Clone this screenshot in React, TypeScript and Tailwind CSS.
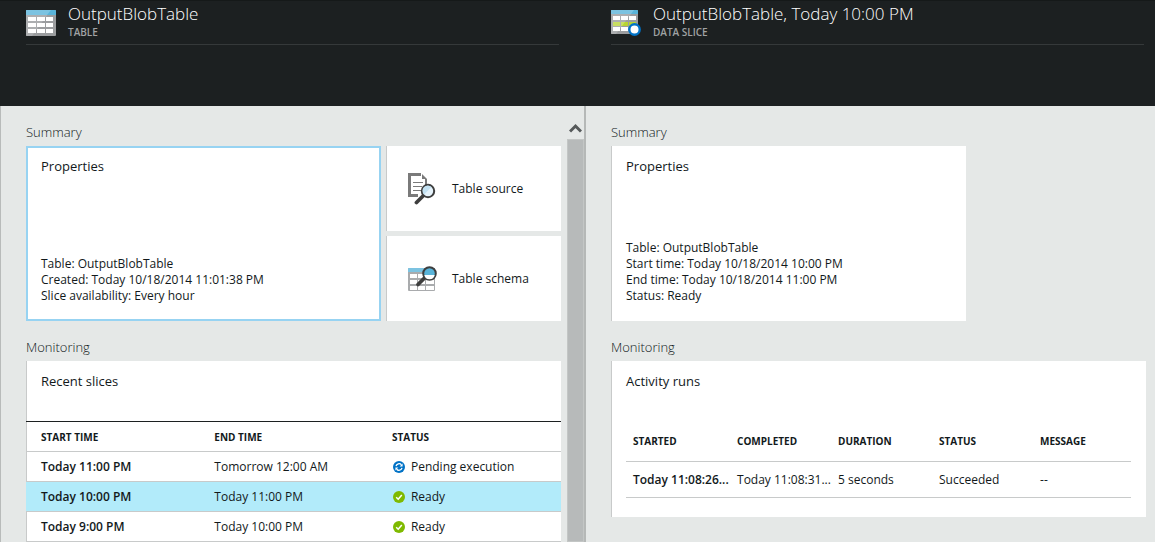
import type { ReactNode } from "react";

function TableIcon() {
  return (
    <svg width="30" height="27" viewBox="0 0 30 27" aria-hidden="true" className="shrink-0">
      <rect x="0" y="0" width="30" height="26" rx="1" fill="#9b9d9f" />
      <path d="M1 0H25L6 26H1A1 1 0 0 1 0 25V1A1 1 0 0 1 1 0Z" fill="#acaeb0" />
      <path d="M0 5V1A1 1 0 0 1 1 0H29A1 1 0 0 1 30 1V5Z" fill="#59b4d9" />
      <path d="M0 5V1A1 1 0 0 1 1 0H25L21 5Z" fill="#7cc3e1" />
      <g fill="#fff">
        <path d="M2 7h8v4H2zM11 7h8v4h-8zM20 7h7v4h-7z" />
        <path d="M2 13h8v4H2zM11 13h8v4h-8zM20 13h7v4h-7z" />
        <path d="M2 19h8v4H2zM11 19h8v4h-8zM20 19h7v4h-7z" />
      </g>
    </svg>
  );
}

function DataSliceIcon() {
  return (
    <svg width="30" height="27" viewBox="0 0 30 27" aria-hidden="true" className="shrink-0">
      <rect x="0" y="0" width="27" height="24" rx="1" fill="#9b9d9f" />
      <path d="M1 0H23L5 24H1A1 1 0 0 1 0 23V1A1 1 0 0 1 1 0Z" fill="#acaeb0" />
      <path d="M0 4V1A1 1 0 0 1 1 0H26A1 1 0 0 1 27 1V4Z" fill="#59b4d9" />
      <path d="M0 4V1A1 1 0 0 1 1 0H23L20 4Z" fill="#7cc3e1" />
      <path d="M2 6h7v4H2zM10 6h7v4h-7zM18 6h7v4h-7zM2 17h7v4H2zM10 17h7v4h-7z" fill="#fff" />
      <path d="M2 12h7v4H2zM10 12h7v4h-7zM18 12h7v4h-7z" fill="#b8d432" />
      <path d="M2 12h7v4H2zM10 12h4l-3 4h-1z" fill="#c8de62" />
      <circle cx="23.500" cy="19.500" r="5.200" fill="#fff" stroke="#0072c6" strokeWidth="2.400" />
    </svg>
  );
}

function SourceIcon() {
  return (
    <svg width="30" height="32" viewBox="0 0 30 32" aria-hidden="true" className="shrink-0">
      <path d="M0 0H13V3H3V21H10V24H0Z" fill="#7a7a7a" />
      <path d="M14 1L19 6H14Z" fill="#7a7a7a" />
      <path d="M18 6V12" stroke="#7a7a7a" strokeWidth="2" />
      <path d="M5 9.500H15M5 13.500H14M5 17.500H13" stroke="#7a7a7a" strokeWidth="1.200" />
      <path d="M15 23L8.500 29.500" stroke="#3e3e3e" strokeWidth="3.800" strokeLinecap="round" />
      <circle cx="20" cy="18" r="6.200" fill="#e6f3fb" stroke="#3e3e3e" strokeWidth="2" />
      <path d="M16 21.500A5.200 5.200 0 0 1 23.500 14Z" fill="#c3e2f3" />
    </svg>
  );
}

function SchemaIcon() {
  return (
    <svg width="30" height="26" viewBox="0 0 30 26" aria-hidden="true" className="shrink-0">
      <rect x="0" y="2" width="27" height="23" rx="1" fill="#a9abad" />
      <path d="M0 6V3A1 1 0 0 1 1 2H27V6Z" fill="#7cc3e1" />
      <path d="M2 8h7v4H2zM10 8h7v4h-7zM18 8h8v4h-8zM2 14h7v4H2zM10 14h7v4h-7zM18 14h8v4h-8zM2 20h7v4H2zM10 20h7v4h-7zM18 20h8v4h-8z" fill="#fff" />
      <path d="M16 12.500L10 18.500" stroke="#3e3e3e" strokeWidth="3.800" strokeLinecap="round" />
      <circle cx="21.500" cy="7.500" r="6.300" fill="#59b4d9" stroke="#3e3e3e" strokeWidth="2" />
      <path d="M16.300 9H26.700A5.300 5.300 0 0 1 16.300 9Z" fill="#fff" />
    </svg>
  );
}

function PendingIcon() {
  return (
    <svg width="12" height="12" viewBox="0 0 12 12" aria-hidden="true" className="shrink-0">
      <circle cx="6" cy="6" r="6" fill="#0072c6" />
      <path d="M3 5.200A3.200 3.200 0 0 1 8.400 3.700M9 6.800A3.200 3.200 0 0 1 3.600 8.300" fill="none" stroke="#fff" strokeWidth="1.300" />
      <path d="M9.600 2.400V5.400H6.600ZM2.400 9.600V6.600H5.400Z" fill="#fff" />
    </svg>
  );
}

function ReadyIcon() {
  return (
    <svg width="12" height="12" viewBox="0 0 12 12" aria-hidden="true" className="shrink-0">
      <circle cx="6" cy="6" r="6" fill="#7fba00" />
      <path d="M3.200 6.200L5.200 8.200L8.800 4" fill="none" stroke="#fff" strokeWidth="1.500" />
    </svg>
  );
}

function BladeHeader({ icon, title, kind, padding }: { icon: ReactNode; title: string; kind: string; padding: string }) {
  return (
    <header className={`h-[106px] border-t border-[#151919] bg-[#1c2021] ${padding}`}>
      <div className="flex h-11 gap-3 border-b border-[#35393a]">
        <div className="pt-[9px]">{icon}</div>
        <div className="pt-px">
          <h1 className="text-[17px] leading-6 font-light whitespace-nowrap text-white">{title}</h1>
          <p className="text-[10px] leading-3 font-semibold text-[#a0a3a4]">{kind}</p>
        </div>
      </div>
    </header>
  );
}

function SectionTitle({ children }: { children: ReactNode }) {
  return <h2 className="pb-1 text-[13px] leading-5 font-light text-[#12191b]">{children}</h2>;
}

function PropertiesTile({ lines, selected }: { lines: string[]; selected?: boolean }) {
  return (
    <article
      className={
        selected
          ? "col-span-2 flex h-[175px] flex-col justify-between border-2 border-[#97d3f2] bg-white px-[13px] pt-2 pb-[15px]"
          : "col-span-2 flex h-[175px] flex-col justify-between border-l border-[#c8caca] bg-white px-[14px] pt-[10px] pb-[17px]"
      }
    >
      <h3 className="text-[13px] leading-5">Properties</h3>
      <div className="text-xs leading-4">
        {lines.map((line) => (
          <p key={line}>{line}</p>
        ))}
      </div>
    </article>
  );
}

function ActionTile({ icon, label }: { icon: ReactNode; label: string }) {
  return (
    <button type="button" className="flex h-[85px] items-center gap-[14px] border-l border-[#c8caca] bg-white pl-[21px] text-left text-xs">
      {icon}
      <span>{label}</span>
    </button>
  );
}

const slices = [
  { start: "Today 11:00 PM", end: "Tomorrow 12:00 AM", status: "Pending execution", pending: true },
  { start: "Today 10:00 PM", end: "Today 11:00 PM", status: "Ready", selected: true },
  { start: "Today 9:00 PM", end: "Today 10:00 PM", status: "Ready" },
];

function RecentSlices() {
  return (
    <article className="bg-white">
      <h3 className="h-[60px] border-l border-[#c8caca] pt-[10px] pl-[14px] text-[13px] leading-5">Recent slices</h3>
      <table className="w-full table-fixed border-t border-[#1c2021] text-left text-xs">
        <thead>
          <tr className="h-[30px] border-b border-[#c8caca] text-[10px]">
            <th className="w-[32.4%] pt-0.5 pl-[15px] font-bold shadow-[inset_1px_0_#c8caca]">START TIME</th>
            <th className="w-[33.2%] pt-0.5 pl-[15px] font-bold">END TIME</th>
            <th className="pt-0.5 pl-[15px] font-bold">STATUS</th>
          </tr>
        </thead>
        <tbody>
          {slices.map((s) => (
            <tr
              key={s.start}
              className={
                s.selected ? "h-[30px] border-b border-[#c8caca] bg-[#b2ebfa]" : "h-[30px] border-b border-[#c8caca]"
              }
            >
              <td className={s.selected ? "pl-[15px] font-semibold" : "pl-[15px] font-semibold shadow-[inset_1px_0_#c8caca]"}>
                {s.start}
              </td>
              <td className="pl-[15px]">{s.end}</td>
              <td className="pl-4">
                <span className="flex items-center gap-1.5">
                  {s.pending ? <PendingIcon /> : <ReadyIcon />}
                  {s.status}
                </span>
              </td>
            </tr>
          ))}
        </tbody>
      </table>
    </article>
  );
}

function ActivityRuns() {
  return (
    <article className="border-l border-[#c8caca] bg-white pt-[10px] pr-[15px] pb-[19px] pl-[14px]">
      <h3 className="text-[13px] leading-5">Activity runs</h3>
      <table className="mt-[30px] w-full table-fixed text-left text-xs">
        <thead>
          <tr className="h-10 border-b border-[#c8caca] text-[10px]">
            <th className="w-[20.6%] pt-0.5 pl-[7px] font-bold">STARTED</th>
            <th className="w-[20%] pt-0.5 pl-[7px] font-bold">COMPLETED</th>
            <th className="w-[20%] pt-0.5 pl-[7px] font-bold">DURATION</th>
            <th className="w-[20%] pt-0.5 pl-[7px] font-bold">STATUS</th>
            <th className="pt-0.5 pl-[7px] font-bold">MESSAGE</th>
          </tr>
        </thead>
        <tbody>
          <tr className="h-9 border-b border-[#c8caca] whitespace-nowrap">
            <td className="pt-0.5 pl-[7px] font-semibold">Today 11:08:26...</td>
            <td className="pt-0.5 pl-[7px]">Today 11:08:31...</td>
            <td className="pt-0.5 pl-[7px]">5 seconds</td>
            <td className="pt-0.5 pl-[7px]">Succeeded</td>
            <td className="pt-0.5 pl-[7px]">--</td>
          </tr>
        </tbody>
      </table>
    </article>
  );
}

export default function App() {
  return (
    <div className="flex min-h-screen bg-[#e5e8e7] font-['Open_Sans','Noto_Sans',sans-serif] text-[#12191b]">
      <section className="flex min-w-0 flex-[586] flex-col">
        <BladeHeader icon={<TableIcon />} title="OutputBlobTable" kind="TABLE" padding="pl-[26px] pr-[27px]" />
        <div className="flex grow border-l border-[#b8bbba]">
          <main className="min-w-0 grow pt-4 pr-1.5 pl-[25px]">
            <SectionTitle>Summary</SectionTitle>
            <div className="grid grid-cols-3 gap-[5px]">
              <PropertiesTile
                selected
                lines={["Table: OutputBlobTable", "Created: Today 10/18/2014 11:01:38 PM", "Slice availability: Every hour"]}
              />
              <div className="flex flex-col gap-[5px]">
                <ActionTile icon={<SourceIcon />} label="Table source" />
                <ActionTile icon={<SchemaIcon />} label="Table schema" />
              </div>
            </div>
            <div className="pt-4">
              <SectionTitle>Monitoring</SectionTitle>
              <RecentSlices />
            </div>
          </main>
          <div className="flex w-[19px] shrink-0 flex-col border-r-2 border-[#b5b8b7]">
            <button type="button" aria-label="Scroll up" className="flex h-[33px] items-end justify-center pb-1.5">
              <svg width="13" height="10" viewBox="0 0 13 10" aria-hidden="true">
                <path d="M1 8.500L6.500 3L12 8.500" fill="none" stroke="#55595a" strokeWidth="3" />
              </svg>
            </button>
            <div className="grow border border-[#c3c6c5] bg-[#b7baba]" />
          </div>
        </div>
      </section>
      <section className="flex min-w-0 flex-[569] flex-col">
        <BladeHeader
          icon={<DataSliceIcon />}
          title="OutputBlobTable, Today 10:00 PM"
          kind="DATA SLICE"
          padding="pl-[25px] pr-[11px]"
        />
        <main className="pt-4 pr-[9px] pl-[25px]">
          <SectionTitle>Summary</SectionTitle>
          <div className="grid grid-cols-3 gap-[5px]">
            <PropertiesTile
              lines={[
                "Table: OutputBlobTable",
                "Start time: Today 10/18/2014 10:00 PM",
                "End time: Today 10/18/2014 11:00 PM",
                "Status: Ready",
              ]}
            />
          </div>
          <div className="pt-4">
            <SectionTitle>Monitoring</SectionTitle>
            <ActivityRuns />
          </div>
        </main>
      </section>
    </div>
  );
}
